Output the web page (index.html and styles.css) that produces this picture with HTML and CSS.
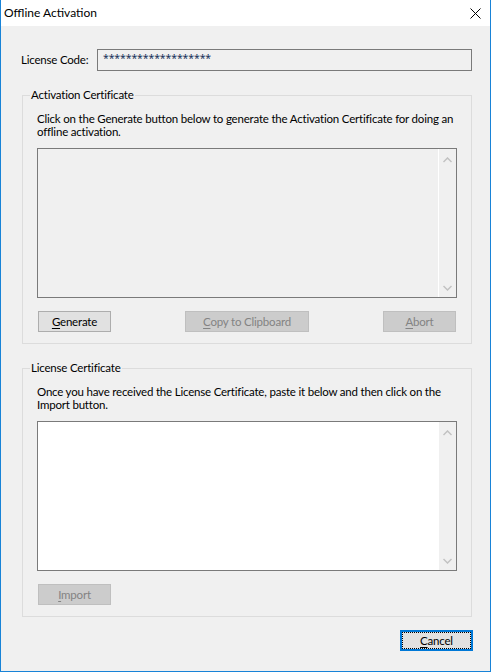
FILE: index.html
```html
<!DOCTYPE html>
<html>
<head>
<meta charset="utf-8">
<link rel="stylesheet" href="styles.css">
</head>
<body>
<div class="window">
  <div class="titlebar">
    <span class="title">Offline Activation</span>
    <svg class="close" width="11" height="11" viewBox="0 0 11 11"><path d="M0.5 0.5 L10.5 10.5 M10.5 0.5 L0.5 10.5" stroke="#000" stroke-width="1" fill="none"/></svg>
  </div>
  <div class="content">
    <div class="code-row">
      <span class="code-label">License Code:</span>
      <div class="code-box">*******************</div>
    </div>

    <section class="group group-activation">
      <div class="group-title">Activation Certificate</div>
      <p class="desc">Click on the Generate button below to generate the Activation Certificate for doing an<br>offline activation.</p>
      <div class="textbox textbox-readonly">
        <div class="textbox-body"></div>
        <div class="scrollbar">
          <svg width="9" height="6" viewBox="0 0 9 6"><path d="M0.5 5 L4.5 1 L8.5 5" stroke="#c2c2c2" stroke-width="1.5" fill="none"/></svg>
          <svg width="9" height="6" viewBox="0 0 9 6"><path d="M0.5 1 L4.5 5 L8.5 1" stroke="#c2c2c2" stroke-width="1.5" fill="none"/></svg>
        </div>
      </div>
      <div class="btn-row">
        <button class="btn"><u>G</u>enerate</button>
        <button class="btn btn-wide" disabled><u>C</u>opy to Clipboard</button>
        <button class="btn" disabled><u>A</u>bort</button>
      </div>
    </section>

    <section class="group group-license">
      <div class="group-title">License Certificate</div>
      <p class="desc">Once you have received the License Certificate, paste it below and then click on the<br>Import button.</p>
      <div class="textbox textbox-editable">
        <div class="textbox-body"></div>
        <div class="scrollbar">
          <svg width="9" height="6" viewBox="0 0 9 6"><path d="M0.5 5 L4.5 1 L8.5 5" stroke="#c2c2c2" stroke-width="1.5" fill="none"/></svg>
          <svg width="9" height="6" viewBox="0 0 9 6"><path d="M0.5 1 L4.5 5 L8.5 1" stroke="#c2c2c2" stroke-width="1.5" fill="none"/></svg>
        </div>
      </div>
      <div class="btn-row">
        <button class="btn" disabled><u>I</u>mport</button>
      </div>
    </section>

    <div class="footer">
      <button class="btn btn-default"><span class="focus-ring"><u>C</u>ancel</span></button>
    </div>
  </div>
</div>
</body>
</html>
```

FILE: styles.css
```css
* { box-sizing: border-box; }
html, body { margin: 0; padding: 0; }
body {
  width: 491px;
  height: 672px;
  font-family: Lato, "Noto Sans", sans-serif;
  font-size: 11.5px;
  letter-spacing: -0.2px;
  color: #000;
  background: #f0f0f0;
}
.window {
  width: 491px;
  height: 672px;
  border: 1px solid #1883d7;
  border-top: none;
  background: #f0f0f0;
  display: flex;
  flex-direction: column;
  overflow: hidden;
}
.titlebar {
  height: 26px;
  background: #fff;
  display: flex;
  align-items: center;
  justify-content: space-between;
  padding-left: 3px;
  padding-right: 9px;
  flex-shrink: 0;
}
.title {
  font-size: 12px;
  letter-spacing: 0;
  line-height: 16px;
  margin-top: -1px;
}
.close { display: block; }

.content {
  padding: 0 18px 0 21px;
}
.code-row {
  margin-top: 23px;
  margin-left: -1px;
  display: flex;
  align-items: center;
}
.code-label {
  width: 76px;
  flex-shrink: 0;
  line-height: 14px;
  white-space: nowrap;
}
.code-box {
  flex: 1;
  height: 22px;
  border: 1px solid #7a7a7a;
  padding-left: 5px;
  font-family: "Noto Sans", sans-serif;
  font-size: 10.5px;
  letter-spacing: -0.1px;
  line-height: 17px;
  color: #17305a;
}

.group {
  border: 1px solid #dcdcdc;
  padding: 0 14px 11px 14px;
}
.group-activation { margin-top: 24px; }
.group-license { margin-top: 24px; }
.group-title {
  display: table;
  margin: -8px 0 0 -7px;
  padding: 0 1px;
  line-height: 14px;
  background: #f0f0f0;
}
.desc {
  margin: 10px 0 0 0;
  line-height: 13px;
  white-space: nowrap;
}
.textbox {
  margin-top: 10px;
  height: 150px;
  border: 1px solid #7a7a7a;
  display: flex;
}
.textbox-readonly { background: #f0f0f0; }
.textbox-editable { background: #fff; }
.textbox-body { flex: 1; }
.scrollbar {
  width: 17px;
  background: #f0f0f0;
  display: flex;
  flex-direction: column;
  justify-content: space-between;
  align-items: center;
  padding: 8px 0 6px;
}
.textbox-readonly .scrollbar {
  width: 18px;
  border-left: 1px solid #fff;
}
.scrollbar svg { display: block; }

.btn-row {
  margin-top: 13px;
  display: flex;
  justify-content: space-between;
  padding: 0 1px;
}
.btn {
  width: 73px;
  height: 21px;
  padding: 0;
  margin: 0;
  border: 1px solid #adadad;
  background: #e1e1e1;
  font-family: inherit;
  font-size: 11.5px;
  letter-spacing: -0.2px;
  line-height: 19px;
  color: #000;
  text-align: center;
}
.btn u { text-decoration-thickness: 1px; text-underline-offset: 2px; }
.btn:disabled {
  background: #cccccc;
  border-color: #bfbfbf;
  color: #838383;
}
.btn-wide { width: 124px; }

.footer {
  margin-top: 13px;
  display: flex;
  justify-content: flex-end;
  margin-right: -1px;
}
.btn-default {
  border: 2px solid #0078d7;
  padding: 0;
  line-height: 17px;
}
.focus-ring {
  display: block;
  height: 17px;
  border: 1px dotted #000;
  line-height: 15px;
}
```
